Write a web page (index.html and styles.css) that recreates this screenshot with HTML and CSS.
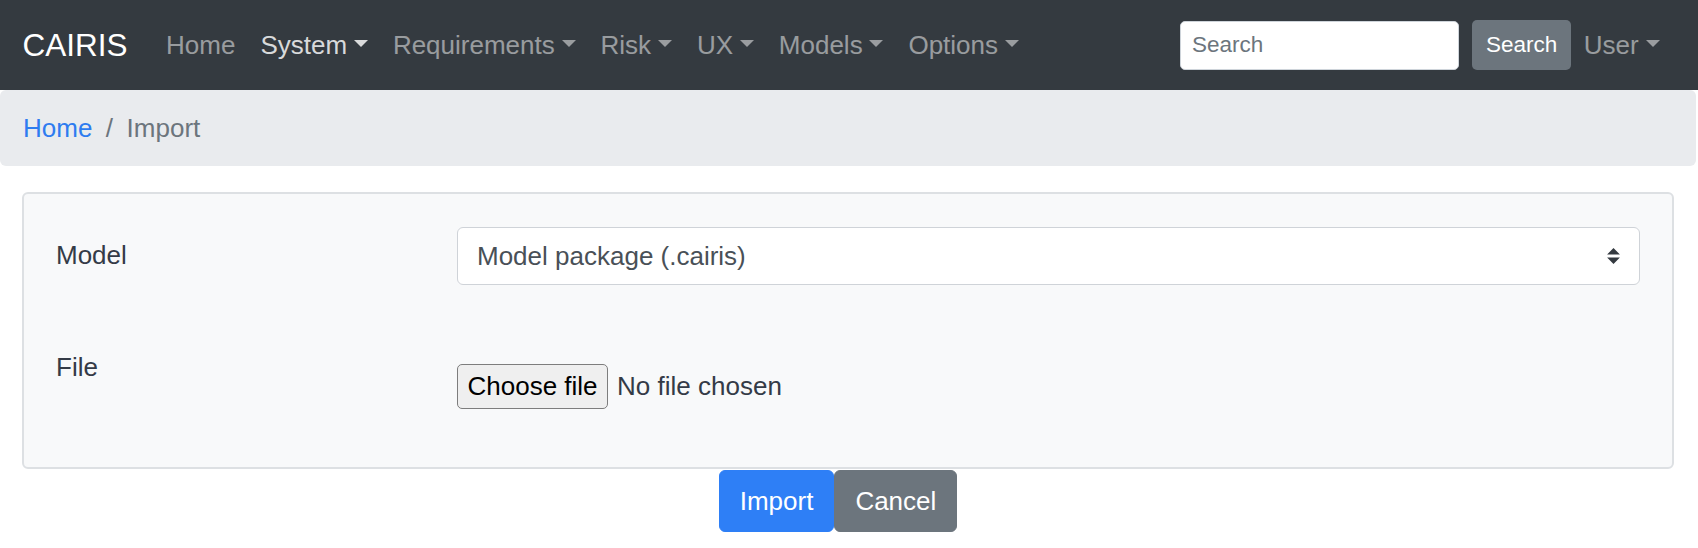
FILE: index.html
```html
<!DOCTYPE html>
<html lang="en">
<head>
<meta charset="utf-8">
<title>CAIRIS - Import</title>
<link rel="stylesheet" href="styles.css">
</head>
<body>
<nav class="navbar">
  <a class="brand" href="#">CAIRIS</a>
  <ul class="nav">
    <li><a class="nav-link" href="#">Home</a></li>
    <li><a class="nav-link active dropdown" href="#">System</a></li>
    <li><a class="nav-link dropdown" href="#">Requirements</a></li>
    <li><a class="nav-link dropdown" href="#">Risk</a></li>
    <li><a class="nav-link dropdown" href="#">UX</a></li>
    <li><a class="nav-link dropdown" href="#">Models</a></li>
    <li><a class="nav-link dropdown" href="#">Options</a></li>
  </ul>
  <form class="search">
    <input class="search-input" type="text" placeholder="Search">
    <button class="search-btn" type="button">Search</button>
  </form>
  <a class="nav-link dropdown" href="#">User</a>
</nav>

<ol class="breadcrumb">
  <li><a class="crumb-link" href="#">Home</a></li>
  <li class="sep">/</li>
  <li class="crumb-current">Import</li>
</ol>

<div class="card">
  <div class="form-row">
    <label class="form-label">Model</label>
    <div class="select-wrap">
      <select class="select">
        <option>Model package (.cairis)</option>
      </select>
      <svg class="select-arrow" viewBox="0 0 4 5" width="13" height="16" aria-hidden="true"><path d="M2 0L0 2h4zm0 5L0 3h4z" fill="#343a40"/></svg>
    </div>
  </div>
  <div class="form-row">
    <label class="form-label">File</label>
    <div class="file-wrap">
      <button class="file-btn" type="button">Choose file</button>
      <span class="file-name">No file chosen</span>
    </div>
  </div>
</div>

<div class="actions">
  <button class="btn btn-primary" type="button">Import</button>
  <button class="btn btn-secondary" type="button">Cancel</button>
</div>
</body>
</html>
```

FILE: styles.css
```css
* {
  box-sizing: border-box;
}

body {
  margin: 0;
  font-family: "Liberation Sans", Arial, Helvetica, sans-serif;
  font-size: 26px;
  line-height: 39px;
  color: #343b47;
  background: #fff;
}

a {
  text-decoration: none;
}

/* Navbar */
.navbar {
  display: flex;
  align-items: center;
  height: 90px;
  padding: 0 26px 0 22.5px;
  background: #343a40;
}

.brand {
  font-size: 31.5px;
  color: #fff;
  margin-right: 26px;
  line-height: 40px;
}

.nav {
  display: flex;
  list-style: none;
  margin: 0;
  padding: 0;
}

.nav-link {
  display: block;
  padding: 0 12.5px;
  color: rgba(255, 255, 255, 0.5);
  line-height: 39px;
  white-space: nowrap;
}

.nav-link.active {
  color: rgba(255, 255, 255, 0.82);
}

.dropdown::after {
  content: "";
  display: inline-block;
  margin-left: 6.8px;
  vertical-align: 6.6px;
  border-top: 7.8px solid;
  border-left: 7.8px solid transparent;
  border-right: 7.8px solid transparent;
  border-bottom: 0;
}

.search {
  display: flex;
  align-items: center;
  gap: 13px;
  margin: 0 0 0 auto;
}

.search-input {
  width: 279px;
  height: 49px;
  padding: 0 11px;
  border: 1px solid #ced4da;
  border-radius: 5px;
  background: #fff;
  font-family: inherit;
  font-size: 22.5px;
  color: #495057;
}

.search-input::placeholder {
  color: #6c757d;
}

.search-btn {
  height: 50px;
  padding: 0 14px;
  border: 0;
  border-radius: 5px;
  background: #6c757d;
  color: #fff;
  font-family: inherit;
  font-size: 22.5px;
}

/* Breadcrumb */
.breadcrumb {
  display: flex;
  list-style: none;
  margin: 0 2px 0 0;
  padding: 18.5px 23px;
  background: #e9ebee;
  border-radius: 6px;
}

.crumb-link {
  color: #2e7cf0;
}

.sep {
  padding: 0 13.5px;
  color: #6c757d;
}

.crumb-current {
  color: #6c757d;
}

/* Card */
.card {
  margin: 26px 24px 0 22px;
  padding: 33px 32px 58px 32px;
  background: #f8f9fa;
  border: 2px solid #dde0e3;
  border-radius: 6px;
  display: flex;
  flex-direction: column;
  gap: 54px;
}

.form-row {
  display: grid;
  grid-template-columns: 401px 1fr;
}

.form-label {
  padding-top: 9px;
  color: #343b47;
}

.select-wrap {
  position: relative;
}

.select {
  display: block;
  width: 100%;
  height: 58px;
  padding: 0 40px 0 19px;
  border: 1.5px solid #cfd3d8;
  border-radius: 6px;
  background: #fff;
  font-family: inherit;
  font-size: 26px;
  color: #495057;
  appearance: none;
  -webkit-appearance: none;
}

.select-arrow {
  position: absolute;
  right: 20px;
  top: 21px;
}

.file-wrap {
  display: flex;
  align-items: center;
  padding-top: 25px;
}

.file-btn {
  height: 45px;
  padding: 0 9.5px;
  border: 1.5px solid #7d7d7d;
  border-radius: 5px;
  background: #efefef;
  color: #000;
  font-family: inherit;
  font-size: 26px;
}

.file-name {
  margin-left: 9px;
  color: #343b47;
}

/* Actions */
.actions {
  display: flex;
  justify-content: center;
  padding: 1px 22px 0 0;
}

.btn {
  height: 62px;
  padding: 0 20px;
  border: 1px solid transparent;
  border-radius: 6px;
  color: #fff;
  font-family: inherit;
  font-size: 26px;
}

.btn-primary {
  background: #2e7ff6;
  border-color: #2e7ff6;
}

.btn-secondary {
  background: #6c757d;
  border-color: #6c757d;
}
```
